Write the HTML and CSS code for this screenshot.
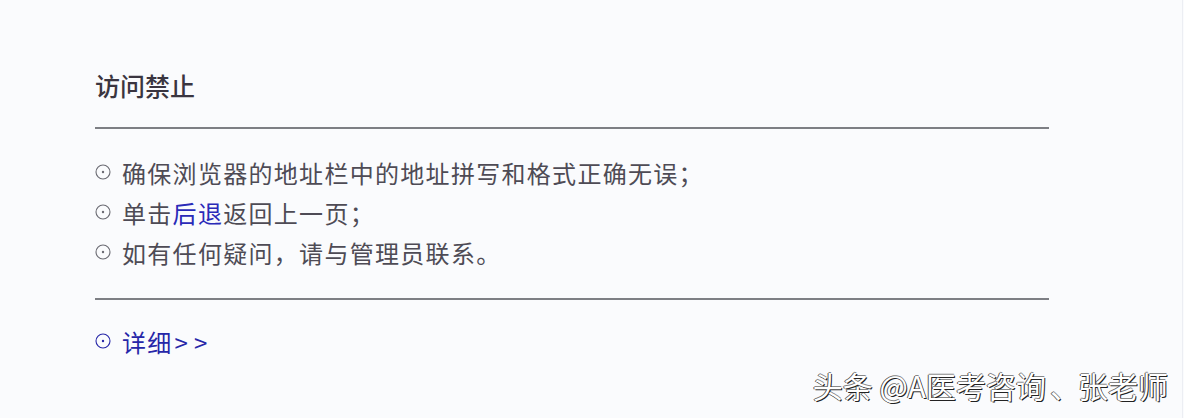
FILE: index.html
```html
<!DOCTYPE html>
<html lang="zh">
<head>
<meta charset="utf-8">
<title>访问禁止</title>
<link rel="stylesheet" href="styles.css">
</head>
<body>
<div class="page">
  <div class="panel">
    <h1 class="title">访问禁止</h1>
    <div class="rule"></div>
    <ul class="tips">
      <li><svg class="dot" viewBox="0 0 16 16"><circle cx="8" cy="8" r="7" fill="none" stroke="currentColor" stroke-width="1.1"/><circle cx="8" cy="8" r="1.2" fill="currentColor"/></svg>确保浏览器的地址栏中的地址拼写和格式正确无误；</li>
      <li><svg class="dot" viewBox="0 0 16 16"><circle cx="8" cy="8" r="7" fill="none" stroke="currentColor" stroke-width="1.1"/><circle cx="8" cy="8" r="1.2" fill="currentColor"/></svg>单击<a class="link" href="#">后退</a>返回上一页；</li>
      <li><svg class="dot" viewBox="0 0 16 16"><circle cx="8" cy="8" r="7" fill="none" stroke="currentColor" stroke-width="1.1"/><circle cx="8" cy="8" r="1.2" fill="currentColor"/></svg>如有任何疑问，请与管理员联系。</li>
    </ul>
    <div class="rule rule-2"></div>
    <a class="more" href="#"><svg class="dot" viewBox="0 0 16 16"><circle cx="8" cy="8" r="7" fill="none" stroke="currentColor" stroke-width="1.1"/><circle cx="8" cy="8" r="1.2" fill="currentColor"/></svg>详细<span class="arrows">&gt;&gt;</span></a>
  </div>
  <div class="watermark">头条 @A医考咨询<span class="sep">、</span>张老师</div>
</div>
</body>
</html>
```
FILE: styles.css
```css
html, body {
  margin: 0;
  padding: 0;
  background: #fafbfd;
}
.page {
  position: relative;
  width: 1182px;
  height: 418px;
  border-right: 1px solid #eceef3;
  overflow: hidden;
  font-family: "Noto Sans CJK SC", "Noto Sans", sans-serif;
}
.panel {
  padding: 68px 0 0 95px;
  width: 954px;
}
.title {
  margin: 0;
  font-size: 25px;
  line-height: 34px;
  font-weight: 500;
  color: #3a3540;
}
.rule {
  height: 2px;
  background: #7d7f84;
  margin-top: 25px;
}
.tips {
  list-style: none;
  margin: 23px 0 0;
  padding: 0;
}
.tips li {
  display: flex;
  align-items: center;
  height: 40px;
  font-size: 24px;
  letter-spacing: 1.3px;
  color: #4e4b55;
}
.dot {
  width: 16px;
  height: 16px;
  margin-right: 11px;
  flex: none;
  color: #6a6a72;
}
.link {
  color: #2a2ab8;
  text-decoration: none;
}
.rule-2 {
  margin-top: 26px;
}
.more {
  display: flex;
  align-items: center;
  height: 40px;
  margin-top: 21px;
  font-size: 24px;
  letter-spacing: 1.3px;
  color: #2626a8;
  text-decoration: none;
}
.arrows {
  letter-spacing: 6px;
  margin-left: 2px;
}
.more .dot {
  color: #2626a8;
}
.watermark {
  position: absolute;
  right: 14px;
  bottom: 16px;
  font-size: 30px;
  line-height: 34px;
  color: #ffffff;
  text-shadow: 1px 1px 0 #222, -1px 0 0 #555, 0 -1px 0 #888;
  white-space: nowrap;
}
.sep {
  margin: 0 -2px 0 4px;
}
```
